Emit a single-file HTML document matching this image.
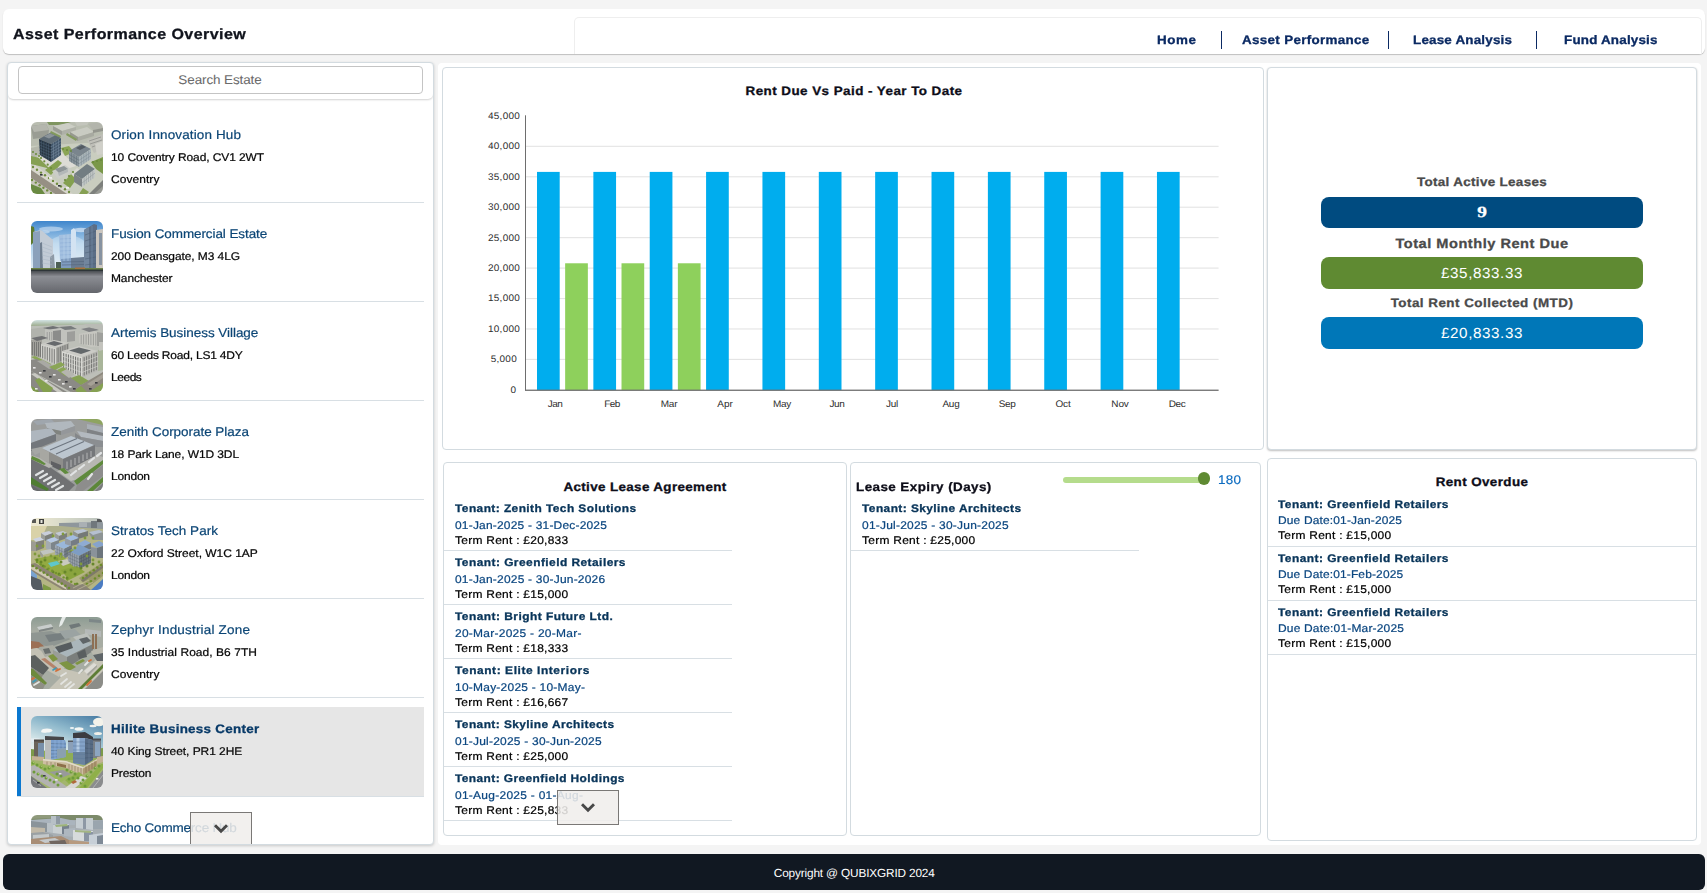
<!DOCTYPE html>
<html><head><meta charset="utf-8"><title>Asset Performance Overview</title>
<style>
html,body{margin:0;padding:0}
body{width:1707px;height:893px;overflow:hidden;position:relative;background:#f4f4f4;font-family:"Liberation Sans",sans-serif;text-rendering:geometricPrecision;}
.t{position:absolute;white-space:nowrap;line-height:16.0px;}
.b{position:absolute;box-sizing:border-box;}
.pn{position:absolute;box-sizing:border-box;background:#fff;border:1px solid #d3dbe0;border-radius:4px;}
.th{position:absolute;display:block;}
.sep{position:absolute;height:1px;background:#d8dfe4;}
.title{font-size:14.7px;font-weight:700;color:#10131c;-webkit-text-stroke:0.3px #10131c;}
.nav{font-size:12.3px;font-weight:700;color:#0b2a63;-webkit-text-stroke:0.3px #0b2a63;}
.h{font-size:12.3px;font-weight:700;color:#0d0d18;-webkit-text-stroke:0.3px #0d0d18;}
.ctitle{font-size:12.3px;font-weight:700;color:#0d0d18;-webkit-text-stroke:0.3px #0d0d18;}
.kl{font-size:12.3px;font-weight:700;color:#4a4a4a;-webkit-text-stroke:0.3px #4a4a4a;}
.kl2{font-size:13.4px;font-weight:700;color:#4a4a4a;-webkit-text-stroke:0.3px #4a4a4a;}
.ten{font-size:10.95px;font-weight:700;color:#083459;-webkit-text-stroke:0.3px #083459;}
.date{font-size:11.2px;font-weight:400;color:#0c4780;-webkit-text-stroke:0.22px #0c4780;}
.term{font-size:11.2px;font-weight:400;color:#000000;-webkit-text-stroke:0.22px #000000;}
.nm{font-size:12.6px;font-weight:400;color:#0b4575;-webkit-text-stroke:0.2px #0b4575;}
.nmb{font-size:12.3px;font-weight:700;color:#083a68;-webkit-text-stroke:0.3px #083a68;}
.ad{font-size:11.2px;font-weight:400;color:#060606;-webkit-text-stroke:0.22px #060606;}
.srch{font-size:12.6px;font-weight:400;color:#6b6b6b;-webkit-text-stroke:0.05px #6b6b6b;}
.pill{font-size:14.6px;font-weight:400;color:#ffffff;-webkit-text-stroke:0.0px #ffffff;}
.cl{font-size:9.5px;font-weight:400;color:#2e2e2e;-webkit-text-stroke:0.0px #2e2e2e;}
.s180{font-size:12.6px;font-weight:400;color:#0d6cc0;-webkit-text-stroke:0.15px #0d6cc0;}
.foot{font-size:11.8px;font-weight:400;color:#ffffff;-webkit-text-stroke:0.0px #ffffff;}
</style></head>
<body>
<div class="b" style="left:3px;top:8.5px;width:1702px;height:45.5px;background:#fff;border-radius:6px;box-shadow:0 1px 1px rgba(0,0,0,.22);"></div>
<div class="b" style="left:574px;top:17px;width:1127.5px;height:37px;background:#fff;border:1px solid #eeeeee;border-bottom:none;border-radius:5px 5px 0 0;"></div>
<div class="t title" id="m_title" style="top:27.00px;letter-spacing:0.408px;left:13.00px;transform-origin:0 50%;transform:scaleX(1.090);">Asset Performance Overview</div>
<div class="t nav" style="top:32.00px;letter-spacing:0.521px;left:1157.30px;transform-origin:0 50%;transform:scaleX(1.090);">Home</div>
<div class="t nav" id="m_nav" style="top:32.00px;letter-spacing:0.295px;left:1241.50px;transform-origin:0 50%;transform:scaleX(1.090);">Asset Performance</div>
<div class="t nav" style="top:32.00px;letter-spacing:0.180px;left:1413.30px;transform-origin:0 50%;transform:scaleX(1.090);">Lease Analysis</div>
<div class="t nav" style="top:32.00px;letter-spacing:0.181px;left:1564.40px;transform-origin:0 50%;transform:scaleX(1.090);">Fund Analysis</div>
<div class="b" style="left:1220.7px;top:31px;width:1.2px;height:17.5px;background:#0b2a63;"></div>
<div class="b" style="left:1387.8px;top:31px;width:1.2px;height:17.5px;background:#0b2a63;"></div>
<div class="b" style="left:1536.1px;top:31px;width:1.2px;height:17.5px;background:#0b2a63;"></div>
<div class="pn" style="left:7px;top:62px;width:427px;height:782.6px;box-shadow:0 1px 3px rgba(0,0,0,.18);overflow:hidden;">
<div class="sep" style="left:9px;top:139px;width:407px;"></div>
<div style="position:absolute;left:23px;top:59px;width:72px;height:72px;"><svg class="th" width="72" height="72" viewBox="0 0 72 72" preserveAspectRatio="none"><defs><filter id="bl0" x="-5%" y="-5%" width="110%" height="110%"><feGaussianBlur stdDeviation="0.45"/></filter><filter id="gn0" x="0" y="0" width="100%" height="100%"><feTurbulence type="fractalNoise" baseFrequency="0.33" numOctaves="2" seed="11" result="n"/><feColorMatrix in="n" type="matrix" values="0 0 0 0 0  0 0 0 0 0  0 0 0 0 0  1.6 1.2 0 0 -1.05"/></filter><filter id="gw0" x="0" y="0" width="100%" height="100%"><feTurbulence type="fractalNoise" baseFrequency="0.3" numOctaves="2" seed="31" result="n"/><feColorMatrix in="n" type="matrix" values="0 0 0 0 1  0 0 0 0 1  0 0 0 0 1  0 1.3 1.5 0 -1.1"/></filter><clipPath id="cp0"><rect x="0" y="0" width="72" height="72" rx="6" ry="6"/></clipPath></defs><g clip-path="url(#cp0)"><g filter="url(#bl0)"><rect x="0" y="0" width="72" height="72" fill="#c9cdbf"/><polygon points="0,0 72,0 72,20 0,24" fill="#b9bdb0"/><polygon points="0,4 15,2 18,8 17,15 2,17" fill="#9a9d94"/><polygon points="0,4 15,2 18,8 3,10" fill="#b4b6ad"/><polygon points="16,0 40,0 30,3 18,3" fill="#7f9560"/><polygon points="22,4 37,1 45,5 31,9" fill="#cccec5"/><polygon points="22,4 31,9 31,13 22,8" fill="#9c9e96"/><polygon points="31,9 45,5 45,9 31,13" fill="#aeb0a7"/><polygon points="20,9 30,14 29,16 19,11" fill="#82995c"/><polygon points="39,10 56,5 63,10 47,15" fill="#c9cbc2"/><polygon points="39,10 47,15 47,19 39,14" fill="#96988f"/><polygon points="47,15 63,10 63,14 47,19" fill="#a8aaa1"/><polygon points="36,11 46,17 45,19 35,13" fill="#849b5e"/><polygon points="44,0 58,0 56,3 46,4" fill="#c3c5bc"/><polygon points="57,2 70,0 72,6 62,8" fill="#b3b5ac"/><polygon points="62,8 72,6 72,9 62,11" fill="#94968e"/><polygon points="56,18 72,12 72,27 63,31" fill="#bfbfb8"/><g stroke="#8f918b" stroke-width="0.8"><line x1="58" y1="19" x2="70" y2="15"/><line x1="59" y1="22" x2="71" y2="18"/><line x1="61" y1="25" x2="72" y2="21"/></g><polygon points="64,22 72,19 72,32 66,33" fill="#d0d0c9"/><polygon points="0,26 8,24 10,34 0,36" fill="#b5b8ac"/><polygon points="0,34 9,36 20,47 0,42" fill="#86a052"/><polygon points="6,34 30,30 45,44 23,51" fill="#dddcd6"/><polygon points="30,26 38,24 43,30 34,34" fill="#8ba556"/><polygon points="14,48 27,38 31,41 20,53" fill="#84a04f"/><polygon points="21,49 34,43 40,47 38,52 27,57" fill="#cbcdc8"/><polygon points="24,47 33,44 37,47 28,51" fill="#8f9698"/><polygon points="27,51 37,47 37,50 28,54" fill="#b3b8b8"/><polygon points="32,61 42,50 47,55 39,66" fill="#84a04f"/><polygon points="60,40 72,35 72,52 65,47" fill="#7a984a"/><polygon points="46,46 52,50 44,56 40,52" fill="#d9d9d3"/><polygon points="8,17 19,11 30,16 20,22" fill="#5f6c76"/><polygon points="8,17 20,22 20,40 9,33" fill="#283542"/><polygon points="20,22 30,16 30,33 20,40" fill="#43566a"/><polygon points="13,14.5 19,11.5 24,13.5 18,16.5" fill="#8b949a"/><g stroke="#4f6478" stroke-width="0.5"><line x1="10.4" y1="18.0" x2="10.4" y2="35.0"/><line x1="12.8" y1="19.0" x2="12.8" y2="36.0"/><line x1="15.2" y1="20.0" x2="15.2" y2="37.0"/><line x1="17.6" y1="21.0" x2="17.6" y2="38.0"/><line x1="8" y1="19.8" x2="20" y2="24.8"/><line x1="8" y1="22.7" x2="20" y2="27.7"/><line x1="8" y1="25.5" x2="20" y2="30.5"/><line x1="8" y1="28.3" x2="20" y2="33.3"/><line x1="8" y1="31.2" x2="20" y2="36.2"/></g><g stroke="#7b8fa3" stroke-width="0.5"><line x1="22.5" y1="20.5" x2="22.5" y2="37.5"/><line x1="25.0" y1="19.0" x2="25.0" y2="36.0"/><line x1="27.5" y1="17.5" x2="27.5" y2="34.5"/><line x1="20" y1="24.8" x2="30" y2="18.8"/><line x1="20" y1="27.7" x2="30" y2="21.7"/><line x1="20" y1="30.5" x2="30" y2="24.5"/><line x1="20" y1="33.3" x2="30" y2="27.3"/><line x1="20" y1="36.2" x2="30" y2="30.2"/></g><polygon points="38,29 50,22 60,27 48,35" fill="#7a858d"/><polygon points="38,29 48,35 48,45 38,39" fill="#87939a"/><polygon points="48,35 60,27 60,37 48,45" fill="#aab5ba"/><polygon points="45,26 51,23 55,25 49,28" fill="#525b62"/><g stroke="#5d6a72" stroke-width="0.5"><line x1="40.5" y1="30.5" x2="40.5" y2="40.5"/><line x1="43.0" y1="32.0" x2="43.0" y2="42.0"/><line x1="45.5" y1="33.5" x2="45.5" y2="43.5"/><line x1="38" y1="32.3" x2="48" y2="38.3"/><line x1="38" y1="35.7" x2="48" y2="41.7"/></g><g stroke="#7d8b93" stroke-width="0.5"><line x1="50.4" y1="33.4" x2="50.4" y2="43.4"/><line x1="52.8" y1="31.8" x2="52.8" y2="41.8"/><line x1="55.2" y1="30.2" x2="55.2" y2="40.2"/><line x1="57.6" y1="28.6" x2="57.6" y2="38.6"/><line x1="48" y1="38.3" x2="60" y2="30.3"/><line x1="48" y1="41.7" x2="60" y2="33.7"/></g><polygon points="43,52 56,42 64,47 51,57" fill="#727d82"/><polygon points="43,52 51,57 51,65 43,60" fill="#7b8285"/><polygon points="51,57 64,47 64,55 51,65" fill="#c3c8c7"/><g stroke="#8d9698" stroke-width="0.5"><line x1="53.2" y1="55.3" x2="53.2" y2="63.3"/><line x1="55.3" y1="53.7" x2="55.3" y2="61.7"/><line x1="57.5" y1="52.0" x2="57.5" y2="60.0"/><line x1="59.7" y1="50.3" x2="59.7" y2="58.3"/><line x1="61.8" y1="48.7" x2="61.8" y2="56.7"/><line x1="51" y1="61.0" x2="64" y2="51.0"/></g><polygon points="0,44 4,43 42,72 36,72 0,48" fill="#d8d6cd"/><polygon points="0,48 36,72 24,72 0,56" fill="#969084"/><polygon points="0,56 24,72 12,72 0,63" fill="#c7c7bb"/><polygon points="0,62 10,66 14,72 0,72" fill="#6b8a43"/><polygon points="58,72 72,58 72,72" fill="#7d807b"/><polygon points="63,72 72,64 72,72" fill="#989a94"/><polygon points="52,66 58,70 56,72 48,72" fill="#86a052"/><g fill="#6e8b3c"><circle cx="2.0" cy="45.0" r="1.2"/><circle cx="6.0" cy="47.8" r="1.2"/><circle cx="10.0" cy="50.6" r="1.2"/><circle cx="14.0" cy="53.3" r="1.2"/><circle cx="18.0" cy="56.1" r="1.2"/><circle cx="22.0" cy="58.9" r="1.2"/><circle cx="26.0" cy="61.7" r="1.2"/><circle cx="30.0" cy="64.4" r="1.2"/><circle cx="34.0" cy="67.2" r="1.2"/><circle cx="38.0" cy="70.0" r="1.2"/></g><g fill="#6e8b3c"><circle cx="1.0" cy="58.0" r="1.2"/><circle cx="4.8" cy="60.6" r="1.2"/><circle cx="8.6" cy="63.2" r="1.2"/><circle cx="12.4" cy="65.8" r="1.2"/><circle cx="16.2" cy="68.4" r="1.2"/><circle cx="20.0" cy="71.0" r="1.2"/></g><g fill="#6a8a3a"><circle cx="10.0" cy="36.0" r="1.1"/><circle cx="13.3" cy="39.3" r="1.1"/><circle cx="16.7" cy="42.7" r="1.1"/><circle cx="20.0" cy="46.0" r="1.1"/><circle cx="34.0" cy="58.0" r="1.1"/><circle cx="38.0" cy="54.0" r="1.1"/><circle cx="42.0" cy="50.0" r="1.1"/><circle cx="62.0" cy="40.0" r="1.1"/><circle cx="66.0" cy="39.0" r="1.1"/><circle cx="70.0" cy="38.0" r="1.1"/></g><g fill="#6a8a3a"><circle cx="2.0" cy="30.0" r="1.0"/><circle cx="5.0" cy="32.0" r="1.0"/><circle cx="8.0" cy="34.0" r="1.0"/><circle cx="32.0" cy="27.0" r="1.0"/><circle cx="36.0" cy="28.0" r="1.0"/><circle cx="40.0" cy="29.0" r="1.0"/></g><rect x="18" y="55" width="3" height="1.8" fill="#ececec"/><rect x="35" y="65" width="3" height="1.8" fill="#ececec"/><rect x="9" y="52" width="2.6" height="1.6" fill="#33373b"/><rect x="27" y="63" width="2.6" height="1.6" fill="#33373b"/></g></g></svg></div>
<div class="t nm" id="m_nm" style="top:64.00px;letter-spacing:0.128px;left:103.00px;transform-origin:0 50%;transform:scaleX(1.070);">Orion Innovation Hub</div>
<div class="t ad" id="m_ad" style="top:87.00px;letter-spacing:-0.073px;left:103.00px;transform-origin:0 50%;transform:scaleX(1.070);">10 Coventry Road, CV1 2WT</div>
<div class="t ad" style="top:109.00px;letter-spacing:0.064px;left:103.00px;transform-origin:0 50%;transform:scaleX(1.070);">Coventry</div>
<div class="sep" style="left:9px;top:238px;width:407px;"></div>
<div style="position:absolute;left:23px;top:158px;width:72px;height:72px;"><svg class="th" width="72" height="72" viewBox="0 0 72 72" preserveAspectRatio="none"><defs><filter id="bl1" x="-5%" y="-5%" width="110%" height="110%"><feGaussianBlur stdDeviation="0.45"/></filter><filter id="gn1" x="0" y="0" width="100%" height="100%"><feTurbulence type="fractalNoise" baseFrequency="0.33" numOctaves="2" seed="12" result="n"/><feColorMatrix in="n" type="matrix" values="0 0 0 0 0  0 0 0 0 0  0 0 0 0 0  1.6 1.2 0 0 -1.05"/></filter><filter id="gw1" x="0" y="0" width="100%" height="100%"><feTurbulence type="fractalNoise" baseFrequency="0.3" numOctaves="2" seed="32" result="n"/><feColorMatrix in="n" type="matrix" values="0 0 0 0 1  0 0 0 0 1  0 0 0 0 1  0 1.3 1.5 0 -1.1"/></filter><clipPath id="cp1"><rect x="0" y="0" width="72" height="72" rx="6" ry="6"/></clipPath></defs><g clip-path="url(#cp1)"><g filter="url(#bl1)"><defs><linearGradient id="sk2" x1="0" y1="0" x2="0" y2="1"><stop offset="0" stop-color="#3f86cc"/><stop offset="0.45" stop-color="#a9cdea"/><stop offset="1" stop-color="#e6eef4"/></linearGradient><linearGradient id="gr2" x1="0" y1="0" x2="0" y2="1"><stop offset="0" stop-color="#4a4d52"/><stop offset="0.25" stop-color="#8c8e94"/><stop offset="0.6" stop-color="#7a7c82"/><stop offset="1" stop-color="#64666c"/></linearGradient></defs><rect x="0" y="0" width="72" height="50" fill="url(#sk2)"/><ellipse cx="20" cy="8" rx="12" ry="2.6" fill="#dfeaf6" opacity="0.55"/><ellipse cx="12" cy="11" rx="7" ry="1.6" fill="#e8f0f8" opacity="0.5"/><ellipse cx="50" cy="9" rx="8" ry="2.2" fill="#eef4fa" opacity="0.6"/><ellipse cx="36" cy="30" rx="22" ry="16" fill="#f2f6fa" opacity="0.35"/><polygon points="0,5 3,6 4,14 2,22 0,24" fill="#5b7a2e"/><polygon points="2,11 10,9 22,19 22,48 2,48" fill="#c3ccd6"/><polygon points="2,11 9,10 9,48 2,48" fill="#8ba1bb"/><polygon points="9,22 11,21 12,48 9,48" fill="#6f7f90"/><polygon points="19,36 23,33 24,48 19,48" fill="#8e9aa6"/><polygon points="28,14 40,13 40,40 29,40" fill="#a3c0e0"/><polygon points="40,9 43,7 45,10 45,38 40,38" fill="#d3e3f2"/><polygon points="30,38 42,37 42,48 30,48" fill="#7f9cc0"/><polygon points="40,37 53,36 53,48 40,48" fill="#6a7c92"/><polygon points="25,41 30,41 30,48 25,48" fill="#4d5f55"/><polygon points="53,9 63,3 66,4 66,48 53,48" fill="#5b6e86"/><polygon points="53,9 58,6 58,48 53,48" fill="#72869e"/><polygon points="65,9 72,8 72,48 65,48" fill="#cbc6bf"/><polygon points="68,12 71,12 71,44 68,44" fill="#8793a1"/><g stroke="#a9b6c4" stroke-width="0.5"><line x1="11" y1="22" x2="21" y2="26"/><line x1="11" y1="26" x2="21" y2="29.5"/><line x1="11" y1="30" x2="21" y2="33"/><line x1="11" y1="34" x2="21" y2="36.5"/><line x1="11" y1="38" x2="21" y2="40"/><line x1="11" y1="42" x2="21" y2="43.5"/></g><g stroke="#86a9d2" stroke-width="0.5"><line x1="29" y1="18" x2="40" y2="17.5"/><line x1="29" y1="22" x2="40" y2="21.5"/><line x1="29" y1="26" x2="40" y2="25.5"/><line x1="29" y1="30" x2="40" y2="29.5"/><line x1="29" y1="34" x2="40" y2="33.5"/></g><g stroke="#c3d8ee" stroke-width="0.5"><line x1="33" y1="14" x2="33" y2="40"/><line x1="37" y1="13.5" x2="37" y2="40"/></g><g stroke="#4a5c73" stroke-width="0.5"><line x1="54" y1="14" x2="65" y2="10"/><line x1="54" y1="20" x2="65" y2="16.5"/><line x1="54" y1="26" x2="65" y2="23"/><line x1="54" y1="32" x2="65" y2="29.5"/><line x1="54" y1="38" x2="65" y2="36"/><line x1="54" y1="44" x2="65" y2="42.5"/></g><g stroke="#7d92ab" stroke-width="0.6"><line x1="61" y1="5" x2="61" y2="48"/></g><g stroke="#52637a" stroke-width="0.6"><line x1="31" y1="41" x2="53" y2="40.5"/><line x1="31" y1="44" x2="53" y2="43.5"/></g><rect x="0" y="47" width="72" height="2" fill="#6b7f45"/><rect x="44" y="46.5" width="10" height="1.6" fill="#a86f3a"/><rect x="0" y="48.5" width="72" height="2" fill="#2d3638"/><rect x="0" y="50" width="72" height="22" fill="url(#gr2)"/></g></g></svg></div>
<div class="t nm" style="top:163.00px;letter-spacing:-0.071px;left:103.00px;transform-origin:0 50%;transform:scaleX(1.070);">Fusion Commercial Estate</div>
<div class="t ad" style="top:186.00px;letter-spacing:-0.063px;left:103.00px;transform-origin:0 50%;transform:scaleX(1.070);">200 Deansgate, M3 4LG</div>
<div class="t ad" style="top:208.00px;letter-spacing:-0.114px;left:103.00px;transform-origin:0 50%;transform:scaleX(1.070);">Manchester</div>
<div class="sep" style="left:9px;top:337px;width:407px;"></div>
<div style="position:absolute;left:23px;top:257px;width:72px;height:72px;"><svg class="th" width="72" height="72" viewBox="0 0 72 72" preserveAspectRatio="none"><defs><filter id="bl2" x="-5%" y="-5%" width="110%" height="110%"><feGaussianBlur stdDeviation="0.45"/></filter><filter id="gn2" x="0" y="0" width="100%" height="100%"><feTurbulence type="fractalNoise" baseFrequency="0.33" numOctaves="2" seed="13" result="n"/><feColorMatrix in="n" type="matrix" values="0 0 0 0 0  0 0 0 0 0  0 0 0 0 0  1.6 1.2 0 0 -1.05"/></filter><filter id="gw2" x="0" y="0" width="100%" height="100%"><feTurbulence type="fractalNoise" baseFrequency="0.3" numOctaves="2" seed="33" result="n"/><feColorMatrix in="n" type="matrix" values="0 0 0 0 1  0 0 0 0 1  0 0 0 0 1  0 1.3 1.5 0 -1.1"/></filter><clipPath id="cp2"><rect x="0" y="0" width="72" height="72" rx="6" ry="6"/></clipPath></defs><g clip-path="url(#cp2)"><g filter="url(#bl2)"><rect x="0" y="0" width="72" height="72" fill="#bdbfb8"/><defs><linearGradient id="sk3" x1="0" y1="0" x2="0" y2="1"><stop offset="0" stop-color="#d3e3e3"/><stop offset="1" stop-color="#9cab8c"/></linearGradient></defs><rect x="0" y="0" width="72" height="6" fill="url(#sk3)"/><polygon points="0,6 72,4 72,14 0,16" fill="#bcbfb8"/><polygon points="0,9 14,7 14,17 0,17" fill="#b1b3ad"/><polygon points="12,8 22,6 30,8 20,10" fill="#6f7274"/><polygon points="14,10 30,8 44,11 44,21 30,23 14,19" fill="#c1c2bd"/><polygon points="22,11 30,10 30,23 22,21" fill="#8b8c8b"/><polygon points="36,12 44,11 44,21 36,22" fill="#9d9e9b"/><polygon points="28,7 40,6 46,9 34,10" fill="#787b7d"/><polygon points="48,14 62,11 72,13 72,26 60,27 48,23" fill="#c6c6c0"/><polygon points="66,12 72,13 72,26 66,26" fill="#9fa09c"/><polygon points="50,9 60,7 68,10 58,12" fill="#7f8183"/><polygon points="52,4 72,4 72,10 60,8" fill="#b9bbb5"/><g stroke="#8d8e8b" stroke-width="0.7"><line x1="50.2" y1="14.9" x2="50.2" y2="24.1"/><line x1="52.6" y1="14.6" x2="52.6" y2="24.4"/><line x1="55.1" y1="14.4" x2="55.1" y2="24.6"/><line x1="57.5" y1="14.2" x2="57.5" y2="24.9"/><line x1="59.9" y1="13.9" x2="59.9" y2="25.1"/><line x1="62.4" y1="13.7" x2="62.4" y2="25.3"/><line x1="64.8" y1="13.4" x2="64.8" y2="25.6"/></g><g stroke="#909190" stroke-width="0.7"><line x1="16.2" y1="12.0" x2="16.2" y2="19.7"/><line x1="18.5" y1="12.0" x2="18.5" y2="20.2"/><line x1="20.8" y1="12.0" x2="20.8" y2="20.7"/></g><polygon points="0,20 11,18 11,38 0,35" fill="#a3a29c"/><polygon points="0,18 11,16 17,18 6,21" fill="#6f7173"/><g stroke="#6d6d69" stroke-width="0.8"><line x1="1.5" y1="22.0" x2="1.5" y2="35.3"/><line x1="3.5" y1="22.0" x2="3.5" y2="35.7"/><line x1="5.5" y1="22.0" x2="5.5" y2="36.1"/><line x1="7.5" y1="22.0" x2="7.5" y2="36.5"/><line x1="9.5" y1="22.0" x2="9.5" y2="36.9"/></g><polygon points="10,24 23,20 38,23 25,28" fill="#c9c9c4"/><polygon points="15,23.5 23,21 32,23.5 24,26" fill="#66696c"/><polygon points="10,24 25,28 25,45 10,38" fill="#d3d3ce"/><polygon points="25,28 38,23 38,37 31,41 25,45" fill="#a8a8a3"/><g stroke="#6f706e" stroke-width="0.9"><line x1="11.7" y1="25.9" x2="11.7" y2="38.3"/><line x1="14.0" y1="26.6" x2="14.0" y2="39.4"/><line x1="16.3" y1="27.2" x2="16.3" y2="40.5"/><line x1="18.7" y1="27.8" x2="18.7" y2="41.6"/><line x1="21.0" y1="28.5" x2="21.0" y2="42.7"/><line x1="23.3" y1="29.1" x2="23.3" y2="43.8"/></g><g stroke="#6f706e" stroke-width="0.8"><line x1="27.1" y1="27.7" x2="27.1" y2="42.4"/><line x1="29.4" y1="26.8" x2="29.4" y2="41.3"/><line x1="31.8" y1="25.9" x2="31.8" y2="40.1"/><line x1="34.0" y1="25.1" x2="34.0" y2="39.0"/><line x1="36.4" y1="24.2" x2="36.4" y2="37.8"/></g><polygon points="31,31 48,26 67,31 51,37" fill="#cbcbc6"/><polygon points="38,30.5 48,27.5 60,30.5 50,34" fill="#64676b"/><polygon points="31,31 51,37 51,58 31,49" fill="#d9d9d4"/><polygon points="51,37 67,31 67,51 51,58" fill="#b9b9b4"/><g stroke="#6c6d6b" stroke-width="1.0"><line x1="32.7" y1="33.1" x2="32.7" y2="49.0"/><line x1="35.1" y1="33.8" x2="35.1" y2="50.0"/><line x1="37.4" y1="34.5" x2="37.4" y2="51.1"/><line x1="39.8" y1="35.2" x2="39.8" y2="52.2"/><line x1="42.2" y1="36.0" x2="42.2" y2="53.2"/><line x1="44.6" y1="36.7" x2="44.6" y2="54.3"/><line x1="46.9" y1="37.4" x2="46.9" y2="55.4"/><line x1="49.3" y1="38.1" x2="49.3" y2="56.4"/></g><g stroke="#6f706e" stroke-width="0.9"><line x1="53.2" y1="37.2" x2="53.2" y2="55.5"/><line x1="55.6" y1="36.3" x2="55.6" y2="54.5"/><line x1="58.0" y1="35.4" x2="58.0" y2="53.4"/><line x1="60.5" y1="34.5" x2="60.5" y2="52.3"/><line x1="62.9" y1="33.5" x2="62.9" y2="51.3"/><line x1="65.3" y1="32.6" x2="65.3" y2="50.2"/></g><g stroke="#d9d9d4" stroke-width="0.6"><line x1="31" y1="36" x2="51" y2="42.5"/><line x1="31" y1="40.5" x2="51" y2="47.5"/><line x1="31" y1="45" x2="51" y2="52.5"/><line x1="51" y1="42.5" x2="67" y2="36"/><line x1="51" y1="47.5" x2="67" y2="41"/><line x1="51" y1="52.5" x2="67" y2="46"/></g><polygon points="67,30 72,29 72,50 67,51" fill="#a9b59a"/><polygon points="68,22 72,22 72,30 68,31" fill="#c3c3bd"/><polygon points="0,37 4,36 20,44 18,47" fill="#8aa556"/><polygon points="0,40 6,39 52,64 40,72 0,51" fill="#8b8a86"/><polygon points="6,41 12,40 24,47 18,49" fill="#a9a9a4"/><polygon points="18,47 30,42 34,45 24,50" fill="#8aa556"/><polygon points="26,50 32,47 40,52 34,56" fill="#8ba657"/><polygon points="30,52 36,49 44,54 38,58" fill="#b5b5af"/><polygon points="40,58 48,55 58,61 50,65" fill="#86a152"/><polygon points="0,51 36,72 0,72" fill="#8a8984"/><polygon points="0,54 4,53 32,72 26,72" fill="#c9c9c2"/><polygon points="4,60 8,58 22,68 20,72 12,72" fill="#84a050"/><polygon points="0,66 6,69 8,72 0,72" fill="#7e9a4c"/><polygon points="50,65 72,52 72,72 40,72" fill="#8e897f"/><polygon points="56,64 72,54 72,58 60,66" fill="#a5a096"/><polygon points="58,72 72,63 72,72" fill="#86a152"/><polygon points="44,70 50,66 56,72 46,72" fill="#86a152"/><g fill="#e6e6e6"><rect x="2" y="47" width="2.6" height="1.6"/><rect x="8" y="52" width="2.6" height="1.6"/><rect x="22" y="54" width="2.6" height="1.6"/><rect x="27" y="59" width="2.6" height="1.6"/><rect x="31" y="63" width="2.6" height="1.6"/><rect x="38" y="66" width="2.6" height="1.6"/><rect x="4" y="68" width="2.6" height="1.6"/><rect x="14" y="60" width="2.6" height="1.6"/></g><g fill="#3a3c40"><rect x="12" y="50" width="2.6" height="1.6"/><rect x="18" y="56" width="2.6" height="1.6"/><rect x="34" y="61" width="2.6" height="1.6"/><rect x="42" y="68" width="2.6" height="1.6"/><rect x="58" y="68" width="2.6" height="1.6"/><rect x="64" y="62" width="2.6" height="1.6"/></g></g></g></svg></div>
<div class="t nm" style="top:262.00px;letter-spacing:-0.029px;left:103.00px;transform-origin:0 50%;transform:scaleX(1.070);">Artemis Business Village</div>
<div class="t ad" style="top:285.00px;letter-spacing:-0.179px;left:103.00px;transform-origin:0 50%;transform:scaleX(1.070);">60 Leeds Road, LS1 4DY</div>
<div class="t ad" style="top:307.00px;letter-spacing:-0.417px;left:103.00px;transform-origin:0 50%;transform:scaleX(1.070);">Leeds</div>
<div class="sep" style="left:9px;top:436px;width:407px;"></div>
<div style="position:absolute;left:23px;top:356px;width:72px;height:72px;"><svg class="th" width="72" height="72" viewBox="0 0 72 72" preserveAspectRatio="none"><defs><filter id="bl3" x="-5%" y="-5%" width="110%" height="110%"><feGaussianBlur stdDeviation="0.45"/></filter><filter id="gn3" x="0" y="0" width="100%" height="100%"><feTurbulence type="fractalNoise" baseFrequency="0.33" numOctaves="2" seed="14" result="n"/><feColorMatrix in="n" type="matrix" values="0 0 0 0 0  0 0 0 0 0  0 0 0 0 0  1.6 1.2 0 0 -1.05"/></filter><filter id="gw3" x="0" y="0" width="100%" height="100%"><feTurbulence type="fractalNoise" baseFrequency="0.3" numOctaves="2" seed="34" result="n"/><feColorMatrix in="n" type="matrix" values="0 0 0 0 1  0 0 0 0 1  0 0 0 0 1  0 1.3 1.5 0 -1.1"/></filter><clipPath id="cp3"><rect x="0" y="0" width="72" height="72" rx="6" ry="6"/></clipPath></defs><g clip-path="url(#cp3)"><g filter="url(#bl3)"><rect x="0" y="0" width="72" height="72" fill="#9b9d9c"/><polygon points="46,0 72,0 72,6" fill="#8ea460"/><polygon points="2,2 20,0 24,4 6,6" fill="#9fa6ad"/><polygon points="14,4 40,2 44,7 30,12 16,9" fill="#b1b8be"/><polygon points="16,9 30,12 30,16 16,13" fill="#80837f"/><polygon points="30,12 44,7 44,12 30,16" fill="#94979a"/><polygon points="0,12 20,9 25,15 0,24" fill="#aeb6be"/><polygon points="0,24 25,15 25,22 0,32" fill="#73777b"/><polygon points="56,5 72,8 72,14 56,10" fill="#a9afb5"/><polygon points="56,10 72,14 72,18 56,14" fill="#7f8285"/><polygon points="46,12 72,17 72,22 50,18" fill="#b3b9bf"/><polygon points="44,14 50,18 50,25 44,21" fill="#84878a"/><polygon points="50,18 72,22 72,28 66,28 50,25" fill="#8b8e91"/><polygon points="0,30 10,28 16,30 4,36" fill="#a5a7a5"/><polygon points="11,29 40,17 63,26 32,40" fill="#bcc6cf"/><g stroke="#6e7680" stroke-width="1.1"><line x1="19" y1="31" x2="46" y2="19.5"/><line x1="25" y1="35" x2="53" y2="22.5"/></g><polygon points="9,29 18,33 18,44 9,39" fill="#a7a7a2"/><polygon points="18,33 32,40 32,53 18,44" fill="#8e8e8b"/><polygon points="20,42 30,46 30,52 20,47" fill="#5f6163"/><polygon points="32,40 64,26 64,37 38,51 32,53" fill="#75777a"/><g stroke="#a9abac" stroke-width="1.2"><line x1="36" y1="42.5" x2="36" y2="50.0"/><line x1="40" y1="40.74" x2="40" y2="48.0"/><line x1="44" y1="38.98" x2="44" y2="46.0"/><line x1="48" y1="37.22" x2="48" y2="44.0"/><line x1="52" y1="35.46" x2="52" y2="42.0"/><line x1="56" y1="33.7" x2="56" y2="40.0"/><line x1="60" y1="31.939999999999998" x2="60" y2="38.0"/></g><polygon points="0,38 9,41 44,66 38,72 0,72" fill="#6f7173"/><polygon points="0,36 9,39 22,47 18,49 0,40" fill="#b5b5b0"/><polygon points="1,37 8,40 15,45 13,46 0,40" fill="#5f8a3c"/><polygon points="26,52 34,50 46,60 40,62" fill="#bdbdb8"/><polygon points="28,50 33,49 38,54 34,55" fill="#5f8a3c"/><polygon points="38,51 66,36 72,38 72,44 44,62" fill="#b7b7b3"/><polygon points="43,62 72,41 72,45 46,66" fill="#5f8a3c"/><polygon points="46,66 72,46 72,57 52,72 44,72" fill="#8d8d8c"/><polygon points="56,72 72,58 72,63 62,72" fill="#5c8739"/><polygon points="64,72 72,64 72,72" fill="#7a7c7d"/><polygon points="0,58 18,70 16,72 0,65" fill="#4f7d33"/><polygon points="0,66 10,72 0,72" fill="#66696b"/><g stroke="#e1e3e4" stroke-width="2.2" stroke-linecap="round"><line x1="5" y1="56" x2="12" y2="52"/><line x1="9" y1="59" x2="16" y2="55"/><line x1="13" y1="62" x2="20" y2="58"/><line x1="17" y1="65" x2="24" y2="61"/><line x1="21" y1="68" x2="28" y2="64"/><line x1="25" y1="71" x2="32" y2="67"/><line x1="40" y1="56" x2="45" y2="52"/><line x1="48" y1="50" x2="53" y2="46"/><line x1="58" y1="43" x2="63" y2="39"/><line x1="66" y1="37" x2="70" y2="34"/><line x1="57" y1="60" x2="61" y2="55"/></g></g></g></svg></div>
<div class="t nm" style="top:361.00px;letter-spacing:-0.027px;left:103.00px;transform-origin:0 50%;transform:scaleX(1.070);">Zenith Corporate Plaza</div>
<div class="t ad" style="top:384.00px;letter-spacing:-0.080px;left:103.00px;transform-origin:0 50%;transform:scaleX(1.070);">18 Park Lane, W1D 3DL</div>
<div class="t ad" style="top:406.00px;letter-spacing:-0.175px;left:103.00px;transform-origin:0 50%;transform:scaleX(1.070);">London</div>
<div class="sep" style="left:9px;top:535px;width:407px;"></div>
<div style="position:absolute;left:23px;top:455px;width:72px;height:72px;"><svg class="th" width="72" height="72" viewBox="0 0 72 72" preserveAspectRatio="none"><defs><filter id="bl4" x="-5%" y="-5%" width="110%" height="110%"><feGaussianBlur stdDeviation="0.45"/></filter><filter id="gn4" x="0" y="0" width="100%" height="100%"><feTurbulence type="fractalNoise" baseFrequency="0.33" numOctaves="2" seed="15" result="n"/><feColorMatrix in="n" type="matrix" values="0 0 0 0 0  0 0 0 0 0  0 0 0 0 0  1.6 1.2 0 0 -1.05"/></filter><filter id="gw4" x="0" y="0" width="100%" height="100%"><feTurbulence type="fractalNoise" baseFrequency="0.3" numOctaves="2" seed="35" result="n"/><feColorMatrix in="n" type="matrix" values="0 0 0 0 1  0 0 0 0 1  0 0 0 0 1  0 1.3 1.5 0 -1.1"/></filter><clipPath id="cp4"><rect x="0" y="0" width="72" height="72" rx="6" ry="6"/></clipPath></defs><g clip-path="url(#cp4)"><g filter="url(#bl4)"><rect x="0" y="0" width="72" height="72" fill="#b4b585"/><defs><linearGradient id="sk5" x1="0" y1="0" x2="1" y2="0"><stop offset="0" stop-color="#f0ead2"/><stop offset="0.5" stop-color="#d5d8c8"/><stop offset="1" stop-color="#b9c0bc"/></linearGradient></defs><rect x="0" y="0" width="72" height="8" fill="url(#sk5)"/><rect x="1" y="1" width="4" height="4" fill="#5a5a55"/><rect x="8" y="1" width="5" height="5" fill="#3f3f3c"/><rect x="66" y="1" width="5" height="5" fill="#55585a"/><rect x="9.5" y="2" width="2" height="3" fill="#e8e8e0"/><polygon points="28,5 72,4 72,11 28,9" fill="#8f979c"/><polygon points="48,4 56,4 56,9 48,9" fill="#aab0b4"/><polygon points="60,3 66,3 66,10 60,10" fill="#6f777c"/><polygon points="0,8 30,8 72,12 72,22 0,22" fill="#aeb08c"/><polygon points="0,8 16,8 10,22 0,22" fill="#d9d2a8"/><polygon points="10,15 18,13 22,15 14,18" fill="#c9cedb"/><polygon points="10,15 14,18 14,23 10,21" fill="#9a9d98"/><polygon points="14,18 22,15 22,20 14,23" fill="#7b7f7c"/><polygon points="24,15 32,13 36,15 28,18" fill="#c3c9d6"/><polygon points="24,15 28,18 28,23 24,21" fill="#9a9d98"/><polygon points="28,18 36,15 36,20 28,23" fill="#7b7f7c"/><polygon points="42,13 52,11 57,13 47,16" fill="#b9c3d3"/><polygon points="42,13 47,16 47,21 42,19" fill="#90948f"/><polygon points="47,16 57,13 57,18 47,21" fill="#757977"/><polygon points="58,15 68,13 72,15 72,22 62,22" fill="#8d9494"/><polygon points="58,14 68,12 72,14 62,17" fill="#b5c0d0"/><polygon points="2,21 9,19 13,22 5,24" fill="#ccd3e2"/><polygon points="0,23 5,24 5,33 0,33" fill="#9c9c92"/><polygon points="5,24 13,22 13,30 5,33" fill="#7f8078"/><polygon points="15,22 23,19 28,22 20,25" fill="#b7c9e4"/><polygon points="15,22 20,25 20,33 15,31" fill="#a3aab0"/><polygon points="20,25 28,22 28,30 20,33" fill="#7d858b"/><polygon points="24,27 33,23 41,27 33,31" fill="#9ab7da"/><polygon points="24,27 33,31 33,41 24,37" fill="#9fa8b2"/><polygon points="33,31 41,27 41,36 33,41" fill="#79828a"/><polygon points="34,20 42,17 48,20 40,23" fill="#a3bce0"/><polygon points="34,20 40,23 40,28 34,26" fill="#949ca5"/><polygon points="40,23 48,20 48,26 40,28" fill="#747c84"/><polygon points="46,26 54,22 60,25 52,29" fill="#8fabd2"/><polygon points="46,26 52,29 52,34 46,32" fill="#939ba4"/><polygon points="52,29 60,25 60,31 52,34" fill="#70787f"/><polygon points="61,26 68,23 72,25 72,28 66,30" fill="#86a3cc"/><polygon points="60,29 66,30 66,40 60,38" fill="#8a929a"/><polygon points="66,30 72,28 72,40 66,40" fill="#6c747b"/><polygon points="37,33 49,27 60,32 48,38" fill="#7e9dc4"/><polygon points="36,34 41,31 43,32 38,35" fill="#8fa83f"/><polygon points="37,33 48,38 48,51 37,46" fill="#98a1ab"/><polygon points="48,38 60,32 60,45 48,51" fill="#6b747c"/><polygon points="9,33 20,31 24,34 12,37" fill="#c1c5c2"/><polygon points="9,33 12,37 12,40 9,37" fill="#9a9d98"/><polygon points="3,41 30,36 46,52 20,60" fill="#93ab42"/><polygon points="17,45 26,43 29,46 20,49" fill="#5fc7cb"/><polygon points="27,43 36,41 40,45 32,48" fill="#c9cabd"/><polygon points="30,52 46,48 54,54 38,62" fill="#8aa43c"/><g fill="#66862c"><circle cx="6" cy="42" r="1.5"/><circle cx="10" cy="44" r="1.5"/><circle cx="14" cy="42" r="1.5"/><circle cx="24" cy="40" r="1.5"/><circle cx="30" cy="44" r="1.5"/><circle cx="12" cy="48" r="1.5"/><circle cx="16" cy="52" r="1.5"/><circle cx="22" cy="54" r="1.5"/><circle cx="28" cy="56" r="1.5"/><circle cx="34" cy="54" r="1.5"/><circle cx="40" cy="52" r="1.5"/><circle cx="44" cy="56" r="1.5"/><circle cx="36" cy="60" r="1.5"/><circle cx="50" cy="50" r="1.5"/><circle cx="56" cy="48" r="1.5"/><circle cx="62" cy="46" r="1.5"/><circle cx="66" cy="50" r="1.5"/><circle cx="58" cy="56" r="1.5"/><circle cx="52" cy="62" r="1.5"/><circle cx="60" cy="64" r="1.5"/><circle cx="46" cy="66" r="1.5"/></g><polygon points="0,46 4,45 48,70 44,72 32,72 0,53" fill="#8d8573"/><polygon points="0,49 2,48 40,72 36,72 0,51" fill="#cfc9b2"/><polygon points="48,60 72,44 72,58 56,70" fill="#9b9a6a"/><polygon points="50,62 72,47 72,50 52,64" fill="#7d7a68"/><polygon points="0,52 6,57 6,60 0,60" fill="#7aa3d0"/><polygon points="0,58 10,62 12,72 0,72" fill="#555b63"/><polygon points="12,66 20,70 20,72 12,72" fill="#7d9a45"/><polygon points="60,72 72,61 72,72" fill="#4c7cc2"/><polygon points="34,68 52,66 60,72 36,72" fill="#8a8474"/><g stroke="#68727c" stroke-width="0.5"><line x1="39.2" y1="34.0" x2="39.2" y2="47.0"/><line x1="41.4" y1="35.0" x2="41.4" y2="48.0"/><line x1="43.6" y1="36.0" x2="43.6" y2="49.0"/><line x1="45.8" y1="37.0" x2="45.8" y2="50.0"/><line x1="37" y1="36.2" x2="48" y2="41.2"/><line x1="37" y1="39.5" x2="48" y2="44.5"/><line x1="37" y1="42.8" x2="48" y2="47.8"/></g><g stroke="#4e5860" stroke-width="0.5"><line x1="50.4" y1="36.8" x2="50.4" y2="49.8"/><line x1="52.8" y1="35.6" x2="52.8" y2="48.6"/><line x1="55.2" y1="34.4" x2="55.2" y2="47.4"/><line x1="57.6" y1="33.2" x2="57.6" y2="46.2"/><line x1="48" y1="41.2" x2="60" y2="35.2"/><line x1="48" y1="44.5" x2="60" y2="38.5"/><line x1="48" y1="47.8" x2="60" y2="41.8"/></g><g stroke="#6c7680" stroke-width="0.5"><line x1="26.2" y1="28.0" x2="26.2" y2="38.0"/><line x1="28.5" y1="29.0" x2="28.5" y2="39.0"/><line x1="30.8" y1="30.0" x2="30.8" y2="40.0"/><line x1="24" y1="30.3" x2="33" y2="34.3"/><line x1="24" y1="33.7" x2="33" y2="37.7"/></g><g stroke="#565f68" stroke-width="0.5"><line x1="35.0" y1="30.0" x2="35.0" y2="39.0"/><line x1="37.0" y1="29.0" x2="37.0" y2="38.0"/><line x1="39.0" y1="28.0" x2="39.0" y2="37.0"/><line x1="33" y1="34.0" x2="41" y2="30.0"/><line x1="33" y1="37.0" x2="41" y2="33.0"/></g><g fill="#6b8a2e"><circle cx="2.0" cy="48.0" r="1.3"/><circle cx="5.6" cy="50.2" r="1.3"/><circle cx="9.2" cy="52.4" r="1.3"/><circle cx="12.8" cy="54.6" r="1.3"/><circle cx="16.4" cy="56.8" r="1.3"/><circle cx="20.0" cy="59.0" r="1.3"/><circle cx="23.6" cy="61.2" r="1.3"/><circle cx="27.2" cy="63.4" r="1.3"/><circle cx="30.8" cy="65.6" r="1.3"/><circle cx="34.4" cy="67.8" r="1.3"/><circle cx="38.0" cy="70.0" r="1.3"/></g><g fill="#73922f"><circle cx="6.0" cy="44.0" r="1.2"/><circle cx="9.8" cy="46.2" r="1.2"/><circle cx="13.6" cy="48.4" r="1.2"/><circle cx="17.4" cy="50.6" r="1.2"/><circle cx="21.2" cy="52.8" r="1.2"/><circle cx="25.0" cy="55.0" r="1.2"/><circle cx="28.8" cy="57.2" r="1.2"/><circle cx="32.6" cy="59.4" r="1.2"/><circle cx="36.4" cy="61.6" r="1.2"/><circle cx="40.2" cy="63.8" r="1.2"/><circle cx="44.0" cy="66.0" r="1.2"/></g><g fill="#6d8c2c"><circle cx="52.0" cy="60.0" r="1.3"/><circle cx="55.6" cy="57.4" r="1.3"/><circle cx="59.2" cy="54.8" r="1.3"/><circle cx="62.8" cy="52.2" r="1.3"/><circle cx="66.4" cy="49.6" r="1.3"/><circle cx="70.0" cy="47.0" r="1.3"/><circle cx="56.0" cy="66.0" r="1.3"/><circle cx="60.0" cy="63.2" r="1.3"/><circle cx="64.0" cy="60.5" r="1.3"/><circle cx="68.0" cy="57.8" r="1.3"/><circle cx="72.0" cy="55.0" r="1.3"/></g><g fill="#7f9a3a"><circle cx="4" cy="36" r="1.4"/><circle cx="8" cy="38" r="1.4"/><circle cx="14" cy="40" r="1.4"/><circle cx="20" cy="38" r="1.4"/><circle cx="26" cy="41" r="1.4"/><circle cx="44" cy="30" r="1.4"/><circle cx="50" cy="46" r="1.4"/><circle cx="62" cy="42" r="1.4"/><circle cx="68" cy="44" r="1.4"/><circle cx="56" cy="38" r="1.4"/><circle cx="30" cy="36" r="1.4"/><circle cx="12" cy="28" r="1.4"/><circle cx="22" cy="18" r="1.4"/><circle cx="40" cy="16" r="1.4"/><circle cx="54" cy="20" r="1.4"/><circle cx="62" cy="20" r="1.4"/><circle cx="6" cy="28" r="1.4"/><circle cx="32" cy="16" r="1.4"/></g><g stroke="#d6cfae" stroke-width="0.5"><line x1="42" y1="70" x2="58" y2="62"/><line x1="46" y1="72" x2="62" y2="64"/></g></g></g></svg></div>
<div class="t nm" style="top:460.00px;letter-spacing:0.052px;left:103.00px;transform-origin:0 50%;transform:scaleX(1.070);">Stratos Tech Park</div>
<div class="t ad" style="top:483.00px;letter-spacing:-0.011px;left:103.00px;transform-origin:0 50%;transform:scaleX(1.070);">22 Oxford Street, W1C 1AP</div>
<div class="t ad" style="top:505.00px;letter-spacing:-0.175px;left:103.00px;transform-origin:0 50%;transform:scaleX(1.070);">London</div>
<div class="sep" style="left:9px;top:634px;width:407px;"></div>
<div style="position:absolute;left:23px;top:554px;width:72px;height:72px;"><svg class="th" width="72" height="72" viewBox="0 0 72 72" preserveAspectRatio="none"><defs><filter id="bl5" x="-5%" y="-5%" width="110%" height="110%"><feGaussianBlur stdDeviation="0.45"/></filter><filter id="gn5" x="0" y="0" width="100%" height="100%"><feTurbulence type="fractalNoise" baseFrequency="0.33" numOctaves="2" seed="16" result="n"/><feColorMatrix in="n" type="matrix" values="0 0 0 0 0  0 0 0 0 0  0 0 0 0 0  1.6 1.2 0 0 -1.05"/></filter><filter id="gw5" x="0" y="0" width="100%" height="100%"><feTurbulence type="fractalNoise" baseFrequency="0.3" numOctaves="2" seed="36" result="n"/><feColorMatrix in="n" type="matrix" values="0 0 0 0 1  0 0 0 0 1  0 0 0 0 1  0 1.3 1.5 0 -1.1"/></filter><clipPath id="cp5"><rect x="0" y="0" width="72" height="72" rx="6" ry="6"/></clipPath></defs><g clip-path="url(#cp5)"><g filter="url(#bl5)"><rect x="0" y="0" width="72" height="72" fill="#a7aca3"/><defs><linearGradient id="sk6" x1="0" y1="0" x2="0" y2="1"><stop offset="0" stop-color="#8d9c93"/><stop offset="1" stop-color="#a7aca3"/></linearGradient></defs><rect x="0" y="0" width="72" height="14" fill="url(#sk6)"/><polygon points="31,0 35,0 31,8 28,10 29,5" fill="#e6eae8"/><polygon points="6,10 20,7 22,10 8,13" fill="#c9cdcc"/><polygon points="8,13 22,10 22,12 8,15" fill="#7f8584"/><polygon points="38,8 48,6 50,9 40,12" fill="#6f7879"/><polygon points="58,2 70,3 70,6 58,5" fill="#7d8788"/><polygon points="54,12 70,14 70,20 54,17" fill="#b5b9b8"/><polygon points="0,16 20,14 40,22 20,30 0,26" fill="#8f9692"/><polygon points="14,18 30,16 34,22 18,25" fill="#777f80"/><polygon points="0,24 8,25 14,30 0,32" fill="#9c6f55"/><polygon points="28,14 44,12 50,18 34,22" fill="#9ba3a2"/><polygon points="42,20 56,16 60,22 48,26" fill="#bcc0bc"/><polygon points="0,32 6,31 34,50 28,60 0,44" fill="#c3c1b4"/><polygon points="8,30 22,28 28,36 14,40" fill="#a9aba2"/><polygon points="12,32 18,31 20,36 14,37" fill="#6a6f6e"/><polygon points="22,33 48,22 62,27 36,40" fill="#aab6bb"/><polygon points="24,30 40,25 42,31 28,36" fill="#565c5e"/><polygon points="48,22 56,20 60,24 52,27" fill="#5e6567"/><polygon points="22,33 36,40 36,48 22,42" fill="#9a9d98"/><polygon points="36,40 62,27 62,34 42,47 36,48" fill="#7a7e7b"/><polygon points="46,36 54,32 56,40 48,42" fill="#5a5f60"/><rect x="61" y="17" width="2" height="15" fill="#8d6f55"/><rect x="64" y="17" width="2" height="15" fill="#8d6f55"/><polygon points="17,39 22,37 27,42 22,45" fill="#7d9443"/><polygon points="28,46 36,44 45,50 38,54" fill="#7d9443"/><polygon points="44,46 52,42 54,44 46,48" fill="#7d9443"/><polygon points="26,50 50,56 72,36 72,58 54,72 18,72 30,60" fill="#c6c4b7"/><polygon points="60,34 72,30 72,40 64,42" fill="#b9b8ad"/><polygon points="62,38 72,36 72,44 66,44" fill="#5e6568"/><polygon points="0,39 4,38 18,51 12,58 0,50" fill="#5c605f"/><polygon points="0,50 12,58 10,62 0,56" fill="#8a8a80"/><polygon points="0,52 2,52 16,66 14,68 0,58" fill="#6d8a3c"/><polygon points="0,58 14,68 12,72 0,72" fill="#8f8f86"/><polygon points="10,42 14,41 28,52 26,54" fill="#b5836a"/><polygon points="53,54 63,46 66,48 56,57" fill="#dddcd6"/><polygon points="56,57 66,48 66,50 57,59" fill="#a5a59f"/><polygon points="47,72 72,47 72,51 51,72" fill="#5d7d35"/><polygon points="54,72 72,54 72,72" fill="#8c8d88"/><g stroke="#e3e4e1" stroke-width="1.8" stroke-linecap="round"><line x1="30" y1="67" x2="36" y2="62"/><line x1="34" y1="70" x2="40" y2="65"/><line x1="37" y1="72" x2="43" y2="67"/><line x1="30" y1="59" x2="35" y2="56"/><line x1="48" y1="56" x2="51" y2="53"/><line x1="54" y1="48" x2="57" y2="45"/><line x1="3" y1="68" x2="8" y2="65"/></g><g stroke="#d2703a" stroke-width="1.8" stroke-linecap="round"><line x1="25" y1="54" x2="29" y2="52"/><line x1="58" y1="44" x2="60" y2="43"/><line x1="56" y1="68" x2="60" y2="64"/><line x1="1" y1="62" x2="3" y2="61"/></g><g stroke="#3e9ab5" stroke-width="1.6" stroke-linecap="round"><line x1="22" y1="53" x2="25" y2="51"/><line x1="2" y1="65" x2="5" y2="63"/></g></g></g></svg></div>
<div class="t nm" style="top:559.00px;letter-spacing:0.182px;left:103.00px;transform-origin:0 50%;transform:scaleX(1.070);">Zephyr Industrial Zone</div>
<div class="t ad" style="top:582.00px;letter-spacing:0.059px;left:103.00px;transform-origin:0 50%;transform:scaleX(1.070);">35 Industrial Road, B6 7TH</div>
<div class="t ad" style="top:604.00px;letter-spacing:0.064px;left:103.00px;transform-origin:0 50%;transform:scaleX(1.070);">Coventry</div>
<div class="b" style="left:9px;top:644px;width:407px;height:89px;background:#e6e6e6;border-left:4px solid #0b78d0;"></div>
<div class="sep" style="left:9px;top:733px;width:407px;"></div>
<div style="position:absolute;left:23px;top:653px;width:72px;height:72px;"><svg class="th" width="72" height="72" viewBox="0 0 72 72" preserveAspectRatio="none"><defs><filter id="bl6" x="-5%" y="-5%" width="110%" height="110%"><feGaussianBlur stdDeviation="0.45"/></filter><filter id="gn6" x="0" y="0" width="100%" height="100%"><feTurbulence type="fractalNoise" baseFrequency="0.33" numOctaves="2" seed="17" result="n"/><feColorMatrix in="n" type="matrix" values="0 0 0 0 0  0 0 0 0 0  0 0 0 0 0  1.6 1.2 0 0 -1.05"/></filter><filter id="gw6" x="0" y="0" width="100%" height="100%"><feTurbulence type="fractalNoise" baseFrequency="0.3" numOctaves="2" seed="37" result="n"/><feColorMatrix in="n" type="matrix" values="0 0 0 0 1  0 0 0 0 1  0 0 0 0 1  0 1.3 1.5 0 -1.1"/></filter><clipPath id="cp6"><rect x="0" y="0" width="72" height="72" rx="6" ry="6"/></clipPath></defs><g clip-path="url(#cp6)"><g filter="url(#bl6)"><defs><linearGradient id="sk7" x1="0.85" y1="0" x2="0.25" y2="1"><stop offset="0" stop-color="#4f82a8"/><stop offset="0.4" stop-color="#8fb9cc"/><stop offset="0.75" stop-color="#cfe2e6"/><stop offset="1" stop-color="#eaf1ee"/></linearGradient></defs><rect x="0" y="0" width="72" height="72" fill="#a3b56e"/><rect x="0" y="0" width="72" height="40" fill="url(#sk7)"/><ellipse cx="16" cy="14.5" rx="5.5" ry="2" fill="#f4f6f4"/><ellipse cx="13" cy="15.5" rx="3" ry="1.3" fill="#f4f6f4"/><ellipse cx="48" cy="13" rx="4.5" ry="1.8" fill="#f4f6f4"/><ellipse cx="41" cy="12" rx="2.2" ry="1" fill="#eef3f4"/><ellipse cx="68" cy="6" rx="6" ry="4.2" fill="#f3f2ea"/><ellipse cx="62" cy="10" rx="3.5" ry="1.2" fill="#eef1ee"/><ellipse cx="67" cy="17.5" rx="4" ry="1.6" fill="#f1f1ea"/><ellipse cx="4" cy="24" rx="6" ry="2" fill="#e6eef2" opacity="0.8"/><polygon points="0,35 72,33 72,44 0,44" fill="#8fae55"/><polygon points="0,33 8,34 8,40 0,40" fill="#7c9a4a"/><polygon points="64,33 72,32 72,40 64,40" fill="#7c9a4a"/><polygon points="3,24 13,24 13,43 3,43" fill="#6a645a"/><polygon points="7,27 13,27 13,41 7,41" fill="#7890aa"/><polygon points="3,23.5 13,23.5 13,25.5 3,25.5" fill="#4e4a44"/><polygon points="14,20 33,21 33,24 14,24" fill="#47474a"/><polygon points="14,24 20,24 20,44 14,44" fill="#b9bcbc"/><polygon points="20,24 34,24 35,27 35,41 20,44" fill="#7a9ecb"/><g stroke="#587595" stroke-width="0.6"><line x1="20" y1="27.5" x2="35" y2="28"/><line x1="20" y1="31" x2="35" y2="31.3"/><line x1="20" y1="34.5" x2="35" y2="34.6"/><line x1="20" y1="38" x2="35" y2="37.8"/><line x1="20" y1="41.3" x2="35" y2="40.2"/></g><g stroke="#9fbbdc" stroke-width="0.5"><line x1="24" y1="24" x2="24" y2="43.3"/><line x1="28" y1="24" x2="28" y2="42.5"/><line x1="32" y1="24" x2="32" y2="41.7"/></g><polygon points="26,33 35,32 35,41 26,42.5" fill="#8aa0b0"/><polygon points="37,25 42,25 42,37 37,37" fill="#8ba0b8"/><polygon points="37,24.5 42,24.5 42,26 37,26" fill="#55585e"/><polygon points="42,17 54,16 62,21 62,24 54,22 42,22" fill="#3a3b40"/><polygon points="42,22 54,22 54,49 42,47" fill="#84a3c8"/><polygon points="45.5,22 48.5,22 48.5,48 45.5,47.5" fill="#b4cbe4"/><polygon points="54,22 62,24 62,44 54,49" fill="#566b83"/><polygon points="42,36 54,36 54,49 42,47" fill="#6a839f"/><g stroke="#5c7899" stroke-width="0.5"><line x1="42" y1="26" x2="54" y2="26"/><line x1="42" y1="30" x2="54" y2="30"/><line x1="42" y1="34" x2="54" y2="34"/><line x1="42" y1="38" x2="54" y2="38.3"/><line x1="42" y1="42" x2="54" y2="42.7"/></g><g stroke="#41546a" stroke-width="0.5"><line x1="54" y1="27" x2="62" y2="28.5"/><line x1="54" y1="32" x2="62" y2="33"/><line x1="54" y1="37" x2="62" y2="37.5"/><line x1="54" y1="42" x2="62" y2="41.5"/></g><g stroke="#7086a0" stroke-width="0.5"><line x1="58" y1="23" x2="58" y2="46.5"/></g><polygon points="62,23 70,23 70,42 62,42" fill="#777f87"/><polygon points="64,26 69,26 69,40 64,40" fill="#8ca5c0"/><polygon points="62,22.5 70,22.5 70,24.5 62,24.5" fill="#4d4f54"/><polygon points="1,40 13,41 13,45 1,44" fill="#c3b193"/><polygon points="12,43 35,45 52,51 52,59 35,52 12,48" fill="#cdbea1"/><polygon points="12,43 35,45 52,51 52,52.5 35,46.5 12,44.5" fill="#e2dccb"/><polygon points="26,47 35,49 35,52 26,50" fill="#8d6f4a"/><g stroke="#8f7d5f" stroke-width="0.7"><line x1="16" y1="45.5" x2="16" y2="48.8"/><line x1="20" y1="46" x2="20" y2="49.6"/><line x1="24" y1="46.4" x2="24" y2="50.3"/><line x1="38" y1="48" x2="38" y2="53.2"/><line x1="41" y1="49" x2="41" y2="54.4"/><line x1="44" y1="50" x2="44" y2="55.6"/><line x1="47" y1="51" x2="47" y2="56.8"/><line x1="50" y1="52" x2="50" y2="58"/></g><polygon points="52,51 66,43 66,50 52,59" fill="#b19c75"/><polygon points="52,51 66,43 66,44.5 52,52.5" fill="#d9d0b8"/><g stroke="#84704f" stroke-width="0.7"><line x1="55" y1="50.5" x2="55" y2="57"/><line x1="58" y1="49" x2="58" y2="55"/><line x1="61" y1="47" x2="61" y2="53.3"/><line x1="64" y1="45.3" x2="64" y2="51.5"/></g><polygon points="66,41 72,40 72,46 66,48" fill="#c3b193"/><polygon points="0,46 12,48 40,60 30,66 0,52" fill="#9bb75c"/><polygon points="0,50 4,49 38,72 20,72 0,60" fill="#b3b3b1"/><polygon points="18,56 32,54 40,58 30,62" fill="#98999b"/><polygon points="0,60 16,72 0,72" fill="#76787b"/><g stroke="#d9d9d9" stroke-width="0.5"><line x1="2" y1="64" x2="10" y2="70"/></g><polygon points="34,64 48,56 52,59 38,68" fill="#8fb04a"/><polygon points="34,72 50,60 56,62 44,72" fill="#d8d8d4"/><polygon points="48,72 70,48 72,48 72,52 56,72" fill="#8fb04a"/><polygon points="58,72 72,54 72,72" fill="#8a8c8e"/><g stroke="#d9d9d9" stroke-width="0.5"><line x1="62" y1="72" x2="72" y2="59"/></g><polygon points="40,66 44,64 46,66 42,68" fill="#b06a3a"/><g fill="#6d9a3a"><circle cx="2" cy="47" r="1.5"/><circle cx="6" cy="49" r="1.5"/><circle cx="10" cy="51" r="1.5"/><circle cx="14" cy="53" r="1.5"/><circle cx="18" cy="52" r="1.5"/><circle cx="22" cy="50" r="1.5"/><circle cx="3" cy="56" r="1.5"/><circle cx="7" cy="58" r="1.5"/><circle cx="11" cy="60" r="1.5"/><circle cx="15" cy="62" r="1.5"/><circle cx="19" cy="64" r="1.5"/><circle cx="36" cy="54" r="1.5"/><circle cx="40" cy="56" r="1.5"/><circle cx="44" cy="58" r="1.5"/><circle cx="38" cy="63" r="1.5"/><circle cx="42" cy="62" r="1.5"/><circle cx="52" cy="64" r="1.5"/><circle cx="56" cy="60" r="1.5"/><circle cx="60" cy="56" r="1.5"/><circle cx="64" cy="52" r="1.5"/><circle cx="68" cy="50" r="1.5"/><circle cx="26" cy="58" r="1.5"/><circle cx="30" cy="60" r="1.5"/><circle cx="23" cy="66" r="1.5"/><circle cx="27" cy="69" r="1.5"/><circle cx="47" cy="62" r="1.5"/><circle cx="50" cy="67" r="1.5"/><circle cx="54" cy="70" r="1.5"/></g><g fill="#a5c765"><circle cx="2.5" cy="46.5" r="0.8"/><circle cx="10.5" cy="50.5" r="0.8"/><circle cx="18.5" cy="51.5" r="0.8"/><circle cx="7.5" cy="57.5" r="0.8"/><circle cx="15.5" cy="61.5" r="0.8"/><circle cx="40.5" cy="55.5" r="0.8"/><circle cx="56.5" cy="59.5" r="0.8"/><circle cx="64.5" cy="51.5" r="0.8"/><circle cx="50.5" cy="66.5" r="0.8"/></g><rect x="12" y="59" width="2.6" height="1.6" fill="#3c4046"/><rect x="24" y="63" width="2.6" height="1.6" fill="#e6e6e6"/><rect x="28" y="57" width="2.4" height="1.4" fill="#e6e6e6"/><rect x="65" y="62" width="2.4" height="1.6" fill="#f0f0f0"/><rect x="6" y="66" width="2.6" height="1.6" fill="#2f3338"/></g></g></svg></div>
<div class="t nmb" id="m_nmb" style="top:658.00px;letter-spacing:0.259px;left:103.00px;transform-origin:0 50%;transform:scaleX(1.090);">Hilite Business Center</div>
<div class="t ad" style="top:681.00px;letter-spacing:-0.051px;left:103.00px;transform-origin:0 50%;transform:scaleX(1.070);">40 King Street, PR1 2HE</div>
<div class="t ad" style="top:703.00px;letter-spacing:-0.149px;left:103.00px;transform-origin:0 50%;transform:scaleX(1.070);">Preston</div>
<div class="sep" style="left:9px;top:832px;width:407px;"></div>
<div style="position:absolute;left:23px;top:752px;width:72px;height:72px;"><svg class="th" width="72" height="72" viewBox="0 0 72 72" preserveAspectRatio="none"><defs><filter id="bl7" x="-5%" y="-5%" width="110%" height="110%"><feGaussianBlur stdDeviation="0.45"/></filter><filter id="gn7" x="0" y="0" width="100%" height="100%"><feTurbulence type="fractalNoise" baseFrequency="0.33" numOctaves="2" seed="18" result="n"/><feColorMatrix in="n" type="matrix" values="0 0 0 0 0  0 0 0 0 0  0 0 0 0 0  1.6 1.2 0 0 -1.05"/></filter><filter id="gw7" x="0" y="0" width="100%" height="100%"><feTurbulence type="fractalNoise" baseFrequency="0.3" numOctaves="2" seed="38" result="n"/><feColorMatrix in="n" type="matrix" values="0 0 0 0 1  0 0 0 0 1  0 0 0 0 1  0 1.3 1.5 0 -1.1"/></filter><clipPath id="cp7"><rect x="0" y="0" width="72" height="72" rx="6" ry="6"/></clipPath></defs><g clip-path="url(#cp7)"><g filter="url(#bl7)"><rect x="0" y="0" width="72" height="72" fill="#a7aeb3"/><rect x="0" y="0" width="72" height="5" fill="#7c8a6a"/><polygon points="0,0 20,0 22,3 0,4" fill="#8f9a7c"/><polygon points="0,5 30,3 44,6 44,10 0,10" fill="#aab4bd"/><polygon points="20,1 29,1 29,9 20,9" fill="#b7c0c6"/><polygon points="25,1 29,1 29,9 25,9" fill="#8e99a3"/><polygon points="45,3 62,3 62,15 45,13" fill="#c5cdd2"/><polygon points="52,3 55,3 55,14 52,14" fill="#8d98a5"/><polygon points="62,6 72,5 72,14 62,14" fill="#9aa5ae"/><polygon points="0,6 16,8 16,17 0,16" fill="#8b949a"/><polygon points="0,12 14,13 14,19 0,18" fill="#c1b9a8"/><polygon points="16,8 22,8 22,18 16,17" fill="#b9c1c6"/><polygon points="22,10 38,9 38,20 22,18" fill="#c9cfd2"/><polygon points="31,11 38,10 38,20 31,19" fill="#77828e"/><polygon points="24,10 36,9 37,11 25,12" fill="#9db37a"/><polygon points="33,14 44,13 44,22 33,21" fill="#aeb7bf"/><polygon points="42,15 62,16 62,27 42,25" fill="#d7dbdc"/><polygon points="53,17 62,17 62,27 53,26" fill="#8a95a3"/><polygon points="44,15 60,16 60,18 44,17" fill="#a3b583"/><polygon points="58,20 72,18 72,29 58,29" fill="#c7cfd7"/><polygon points="66,21 72,20 72,29 66,29" fill="#7f8a97"/><polygon points="0,18 12,17 22,20 22,25 0,25" fill="#9aa0a3"/><polygon points="2,20 18,19 18,23 2,24" fill="#c3c8ca"/><polygon points="0,24 30,21 42,27 42,30 0,30" fill="#a88d74"/><polygon points="8,25 24,23 30,26 14,28" fill="#c5c9cb"/><polygon points="18,26 34,25 36,30 20,30" fill="#6f6660"/><polygon points="38,25 58,27 58,30 38,30" fill="#b79a7f"/><rect x="0" y="29" width="72" height="43" fill="#9a9fa3"/></g></g></svg></div>
<div class="t nm" style="top:757.00px;letter-spacing:-0.172px;left:103.00px;transform-origin:0 50%;transform:scaleX(1.070);">Echo Commerce Hub</div>
<div class="t ad" style="top:780.00px;letter-spacing:0.065px;left:103.00px;transform-origin:0 50%;transform:scaleX(1.070);">12 Market Street, M1 1AA</div>
<div class="t ad" style="top:802.00px;letter-spacing:-0.114px;left:103.00px;transform-origin:0 50%;transform:scaleX(1.070);">Manchester</div>
<div class="b" style="left:0;top:0;width:425px;height:35.6px;background:#fff;border-radius:5px;box-shadow:0 1px 2px rgba(0,0,0,.18);"></div>
<div class="b" style="left:10px;top:3px;width:405px;height:27.5px;background:#fff;border:1px solid #c4c4c4;border-radius:4px;"></div>
<div class="t srch" id="m_srch" style="top:9.00px;letter-spacing:-0.098px;left:212.30px;transform:translateX(-50%) scaleX(1.070);margin-left:-0.05px;">Search Estate</div>
<div class="b" style="left:182px;top:749px;width:62px;height:34.6px;background:rgba(240,238,236,.87);border:1.1px solid #7a7876;"></div>
<svg style="position:absolute;left:206px;top:761px" width="14" height="10" viewBox="0 0 14 10"><path d="M1 1.3 L7 7.3 L13 1.3" fill="none" stroke="#484848" stroke-width="2.9"/></svg>
</div>
<div class="b" style="left:437.5px;top:62.5px;width:1263.5px;height:782px;background:#fff;border-radius:4px;"></div>
<div class="pn" style="left:442px;top:67px;width:822px;height:383px;"></div>
<div class="t ctitle" id="m_ctitle" style="top:83.00px;letter-spacing:0.417px;left:853.30px;transform:translateX(-50%) scaleX(1.090);margin-left:0.23px;">Rent Due Vs Paid - Year To Date</div>
<svg style="position:absolute;left:0;top:0" width="1707" height="893" viewBox="0 0 1707 893"><rect x="526" y="358.86" width="692.6" height="1.1" fill="#e4e4e4"/><rect x="526" y="328.42" width="692.6" height="1.1" fill="#e4e4e4"/><rect x="526" y="297.98" width="692.6" height="1.1" fill="#e4e4e4"/><rect x="526" y="267.54" width="692.6" height="1.1" fill="#e4e4e4"/><rect x="526" y="237.10" width="692.6" height="1.1" fill="#e4e4e4"/><rect x="526" y="206.66" width="692.6" height="1.1" fill="#e4e4e4"/><rect x="526" y="176.22" width="692.6" height="1.1" fill="#e4e4e4"/><rect x="526" y="145.78" width="692.6" height="1.1" fill="#e4e4e4"/><rect x="537.00" y="171.90" width="22.70" height="218.30" fill="#00adee"/><rect x="565.15" y="263.28" width="22.70" height="126.92" fill="#8ed05c"/><rect x="593.36" y="171.90" width="22.70" height="218.30" fill="#00adee"/><rect x="621.51" y="263.28" width="22.70" height="126.92" fill="#8ed05c"/><rect x="649.72" y="171.90" width="22.70" height="218.30" fill="#00adee"/><rect x="677.87" y="263.28" width="22.70" height="126.92" fill="#8ed05c"/><rect x="706.08" y="171.90" width="22.70" height="218.30" fill="#00adee"/><rect x="762.44" y="171.90" width="22.70" height="218.30" fill="#00adee"/><rect x="818.80" y="171.90" width="22.70" height="218.30" fill="#00adee"/><rect x="875.16" y="171.90" width="22.70" height="218.30" fill="#00adee"/><rect x="931.52" y="171.90" width="22.70" height="218.30" fill="#00adee"/><rect x="987.88" y="171.90" width="22.70" height="218.30" fill="#00adee"/><rect x="1044.24" y="171.90" width="22.70" height="218.30" fill="#00adee"/><rect x="1100.60" y="171.90" width="22.70" height="218.30" fill="#00adee"/><rect x="1156.96" y="171.90" width="22.70" height="218.30" fill="#00adee"/><rect x="525" y="115.3" width="1" height="275" fill="#6e6e6e"/><rect x="525" y="389.6" width="693.6" height="1.3" fill="#6e6e6e"/></svg>
<div class="t cl" style="top:383.00px;letter-spacing:0.000px;left:516.40px;transform-origin:100% 50%;transform:translateX(-100%) scaleX(1.050);margin-left:0.00px;">0</div>
<div class="t cl" style="top:352.00px;letter-spacing:0.253px;left:516.40px;transform-origin:100% 50%;transform:translateX(-100%) scaleX(1.050);margin-left:0.27px;">5,000</div>
<div class="t cl" style="top:322.00px;letter-spacing:0.230px;left:519.30px;transform-origin:100% 50%;transform:translateX(-100%) scaleX(1.050);margin-left:0.24px;">10,000</div>
<div class="t cl" style="top:291.00px;letter-spacing:0.230px;left:519.30px;transform-origin:100% 50%;transform:translateX(-100%) scaleX(1.050);margin-left:0.24px;">15,000</div>
<div class="t cl" style="top:261.00px;letter-spacing:0.230px;left:519.30px;transform-origin:100% 50%;transform:translateX(-100%) scaleX(1.050);margin-left:0.24px;">20,000</div>
<div class="t cl" style="top:231.00px;letter-spacing:0.230px;left:519.30px;transform-origin:100% 50%;transform:translateX(-100%) scaleX(1.050);margin-left:0.24px;">25,000</div>
<div class="t cl" style="top:200.00px;letter-spacing:0.230px;left:519.30px;transform-origin:100% 50%;transform:translateX(-100%) scaleX(1.050);margin-left:0.24px;">30,000</div>
<div class="t cl" style="top:170.00px;letter-spacing:0.230px;left:519.30px;transform-origin:100% 50%;transform:translateX(-100%) scaleX(1.050);margin-left:0.24px;">35,000</div>
<div class="t cl" style="top:139.00px;letter-spacing:0.230px;left:519.30px;transform-origin:100% 50%;transform:translateX(-100%) scaleX(1.050);margin-left:0.24px;">40,000</div>
<div class="t cl" id="m_cl" style="top:109.00px;letter-spacing:0.230px;left:519.30px;transform-origin:100% 50%;transform:translateX(-100%) scaleX(1.050);margin-left:0.24px;">45,000</div>
<div class="t cl" style="top:397.00px;letter-spacing:-0.460px;left:555.30px;transform:translateX(-50%) scaleX(1.050);margin-left:-0.24px;">Jan</div>
<div class="t cl" style="top:397.00px;letter-spacing:-0.539px;left:612.40px;transform:translateX(-50%) scaleX(1.050);margin-left:-0.28px;">Feb</div>
<div class="t cl" style="top:397.00px;letter-spacing:-0.206px;left:669.20px;transform:translateX(-50%) scaleX(1.050);margin-left:-0.11px;">Mar</div>
<div class="t cl" style="top:397.00px;letter-spacing:-0.002px;left:724.90px;transform:translateX(-50%) scaleX(1.050);margin-left:-0.00px;">Apr</div>
<div class="t cl" style="top:397.00px;letter-spacing:-0.296px;left:782.40px;transform:translateX(-50%) scaleX(1.050);margin-left:-0.16px;">May</div>
<div class="t cl" style="top:397.00px;letter-spacing:-0.324px;left:837.60px;transform:translateX(-50%) scaleX(1.050);margin-left:-0.17px;">Jun</div>
<div class="t cl" style="top:397.00px;letter-spacing:-0.267px;left:892.20px;transform:translateX(-50%) scaleX(1.050);margin-left:-0.14px;">Jul</div>
<div class="t cl" style="top:397.00px;letter-spacing:-0.184px;left:951.00px;transform:translateX(-50%) scaleX(1.050);margin-left:-0.10px;">Aug</div>
<div class="t cl" style="top:397.00px;letter-spacing:-0.341px;left:1007.60px;transform:translateX(-50%) scaleX(1.050);margin-left:-0.18px;">Sep</div>
<div class="t cl" style="top:397.00px;letter-spacing:-0.136px;left:1063.30px;transform:translateX(-50%) scaleX(1.050);margin-left:-0.07px;">Oct</div>
<div class="t cl" style="top:397.00px;letter-spacing:-0.149px;left:1120.50px;transform:translateX(-50%) scaleX(1.050);margin-left:-0.08px;">Nov</div>
<div class="t cl" style="top:397.00px;letter-spacing:-0.401px;left:1177.00px;transform:translateX(-50%) scaleX(1.050);margin-left:-0.21px;">Dec</div>
<div class="pn" style="left:1267px;top:66.5px;width:430px;height:383.5px;box-shadow:0 1px 2px rgba(0,0,0,.25);"></div>
<div class="t kl" id="m_kl" style="top:174.00px;letter-spacing:0.308px;left:1482.00px;transform:translateX(-50%) scaleX(1.090);margin-left:0.17px;">Total Active Leases</div>
<div class="t kl2" style="top:236.00px;letter-spacing:0.469px;left:1482.00px;transform:translateX(-50%) scaleX(1.090);margin-left:0.26px;">Total Monthly Rent Due</div>
<div class="t kl" style="top:295.00px;letter-spacing:0.437px;left:1482.00px;transform:translateX(-50%) scaleX(1.090);margin-left:0.24px;">Total Rent Collected (MTD)</div>
<div class="b" style="left:1321px;top:197px;width:322px;height:31px;border-radius:8px;background:#004b80;"></div>
<div class="b" style="left:1321px;top:257px;width:322px;height:32px;border-radius:8px;background:#5f8a32;"></div>
<div class="b" style="left:1321px;top:317px;width:322px;height:32px;border-radius:8px;background:#0077b8;"></div>
<div class="t" style="left:1481.6px;top:204.96px;transform:translateX(-50%) scaleX(1.24);font-family:'Liberation Serif',serif;font-weight:700;font-size:15.6px;color:#fff;-webkit-text-stroke:0.3px #fff;">9</div>
<div class="t pill" id="m_pill" style="top:266.00px;letter-spacing:0.580px;left:1482.00px;transform:translateX(-50%) scaleX(1.040);margin-left:0.30px;">£35,833.33</div>
<div class="t pill" style="top:326.00px;letter-spacing:0.580px;left:1482.00px;transform:translateX(-50%) scaleX(1.040);margin-left:0.30px;">£20,833.33</div>
<div class="pn" style="left:443px;top:462px;width:404px;height:374px;"></div>
<div class="t h" id="m_h" style="top:479.00px;letter-spacing:0.334px;left:645.00px;transform:translateX(-50%) scaleX(1.090);margin-left:0.18px;">Active Lease Agreement</div>
<div class="t ten" id="m_ten" style="top:501.00px;letter-spacing:0.392px;left:455.30px;transform-origin:0 50%;transform:scaleX(1.090);">Tenant: Zenith Tech Solutions</div>
<div class="t date" id="m_date" style="top:518.00px;letter-spacing:0.188px;left:455.30px;transform-origin:0 50%;transform:scaleX(1.070);">01-Jan-2025 - 31-Dec-2025</div>
<div class="t term" id="m_term" style="top:533.00px;letter-spacing:0.246px;left:455.30px;transform-origin:0 50%;transform:scaleX(1.070);">Term Rent : £20,833</div>
<div class="sep" style="left:444px;top:550px;width:288px;"></div>
<div class="t ten" style="top:555.00px;letter-spacing:0.420px;left:455.30px;transform-origin:0 50%;transform:scaleX(1.090);">Tenant: Greenfield Retailers</div>
<div class="t date" style="top:572.00px;letter-spacing:0.195px;left:455.30px;transform-origin:0 50%;transform:scaleX(1.070);">01-Jan-2025 - 30-Jun-2026</div>
<div class="t term" style="top:587.00px;letter-spacing:0.246px;left:455.30px;transform-origin:0 50%;transform:scaleX(1.070);">Term Rent : £15,000</div>
<div class="sep" style="left:444px;top:604px;width:288px;"></div>
<div class="t ten" style="top:609.00px;letter-spacing:0.430px;left:455.30px;transform-origin:0 50%;transform:scaleX(1.090);">Tenant: Bright Future Ltd.</div>
<div class="t date" style="top:626.00px;letter-spacing:0.249px;left:455.30px;transform-origin:0 50%;transform:scaleX(1.070);">20-Mar-2025 - 20-Mar-</div>
<div class="t term" style="top:641.00px;letter-spacing:0.246px;left:455.30px;transform-origin:0 50%;transform:scaleX(1.070);">Term Rent : £18,333</div>
<div class="sep" style="left:444px;top:658px;width:288px;"></div>
<div class="t ten" style="top:663.00px;letter-spacing:0.531px;left:455.30px;transform-origin:0 50%;transform:scaleX(1.090);">Tenant: Elite Interiors</div>
<div class="t date" style="top:680.00px;letter-spacing:0.227px;left:455.30px;transform-origin:0 50%;transform:scaleX(1.070);">10-May-2025 - 10-May-</div>
<div class="t term" style="top:695.00px;letter-spacing:0.246px;left:455.30px;transform-origin:0 50%;transform:scaleX(1.070);">Term Rent : £16,667</div>
<div class="sep" style="left:444px;top:712px;width:288px;"></div>
<div class="t ten" style="top:717.00px;letter-spacing:0.390px;left:455.30px;transform-origin:0 50%;transform:scaleX(1.090);">Tenant: Skyline Architects</div>
<div class="t date" style="top:734.00px;letter-spacing:0.215px;left:455.30px;transform-origin:0 50%;transform:scaleX(1.070);">01-Jul-2025 - 30-Jun-2025</div>
<div class="t term" style="top:749.00px;letter-spacing:0.246px;left:455.30px;transform-origin:0 50%;transform:scaleX(1.070);">Term Rent : £25,000</div>
<div class="sep" style="left:444px;top:766px;width:288px;"></div>
<div class="t ten" style="top:771.00px;letter-spacing:0.378px;left:455.30px;transform-origin:0 50%;transform:scaleX(1.090);">Tenant: Greenfield Holdings</div>
<div class="t date" style="top:788.00px;letter-spacing:0.254px;left:455.30px;transform-origin:0 50%;transform:scaleX(1.070);">01-Aug-2025 - 01-Aug-</div>
<div class="t term" style="top:803.00px;letter-spacing:0.246px;left:455.30px;transform-origin:0 50%;transform:scaleX(1.070);">Term Rent : £25,833</div>
<div class="sep" style="left:444px;top:820px;width:288px;"></div>
<div class="b" style="left:557px;top:790px;width:62px;height:34.6px;background:rgba(240,238,236,.87);border:1.1px solid #7a7876;"></div>
<svg style="position:absolute;left:581px;top:802.6px" width="14" height="10" viewBox="0 0 14 10"><path d="M1 1.3 L7 7.3 L13 1.3" fill="none" stroke="#484848" stroke-width="2.9"/></svg>
<div class="pn" style="left:850px;top:462px;width:411px;height:374px;"></div>
<div class="t h" style="top:479.00px;letter-spacing:0.403px;left:856.00px;transform-origin:0 50%;transform:scaleX(1.090);">Lease Expiry (Days)</div>
<div class="b" style="left:1063px;top:477px;width:142px;height:6px;border-radius:3px;background:#b5dc8c;"></div>
<div class="b" style="left:1197.5px;top:472.2px;width:12.4px;height:12.4px;border-radius:50%;background:#5f8a32;"></div>
<div class="t s180" id="m_180" style="top:472.00px;letter-spacing:0.188px;left:1218.30px;transform-origin:0 50%;transform:scaleX(1.070);">180</div>
<div class="t ten" style="top:501.00px;letter-spacing:0.390px;left:861.90px;transform-origin:0 50%;transform:scaleX(1.090);">Tenant: Skyline Architects</div>
<div class="t date" style="top:518.00px;letter-spacing:0.215px;left:861.90px;transform-origin:0 50%;transform:scaleX(1.070);">01-Jul-2025 - 30-Jun-2025</div>
<div class="t term" style="top:533.00px;letter-spacing:0.246px;left:861.90px;transform-origin:0 50%;transform:scaleX(1.070);">Term Rent : £25,000</div>
<div class="sep" style="left:851px;top:550px;width:288px;"></div>
<div class="pn" style="left:1267px;top:458px;width:430px;height:382.5px;"></div>
<div class="t h" style="top:474.00px;letter-spacing:0.365px;left:1482.30px;transform:translateX(-50%) scaleX(1.090);margin-left:0.20px;">Rent Overdue</div>
<div class="t ten" style="top:497.00px;letter-spacing:0.420px;left:1278.30px;transform-origin:0 50%;transform:scaleX(1.090);">Tenant: Greenfield Retailers</div>
<div class="t date" style="top:513.00px;letter-spacing:0.143px;left:1278.30px;transform-origin:0 50%;transform:scaleX(1.070);">Due Date:01-Jan-2025</div>
<div class="t term" style="top:528.00px;letter-spacing:0.246px;left:1278.30px;transform-origin:0 50%;transform:scaleX(1.070);">Term Rent : £15,000</div>
<div class="sep" style="left:1268px;top:546px;width:428px;"></div>
<div class="t ten" style="top:551.00px;letter-spacing:0.420px;left:1278.30px;transform-origin:0 50%;transform:scaleX(1.090);">Tenant: Greenfield Retailers</div>
<div class="t date" style="top:567.00px;letter-spacing:0.133px;left:1278.30px;transform-origin:0 50%;transform:scaleX(1.070);">Due Date:01-Feb-2025</div>
<div class="t term" style="top:582.00px;letter-spacing:0.246px;left:1278.30px;transform-origin:0 50%;transform:scaleX(1.070);">Term Rent : £15,000</div>
<div class="sep" style="left:1268px;top:600px;width:428px;"></div>
<div class="t ten" style="top:605.00px;letter-spacing:0.420px;left:1278.30px;transform-origin:0 50%;transform:scaleX(1.090);">Tenant: Greenfield Retailers</div>
<div class="t date" style="top:621.00px;letter-spacing:0.174px;left:1278.30px;transform-origin:0 50%;transform:scaleX(1.070);">Due Date:01-Mar-2025</div>
<div class="t term" style="top:636.00px;letter-spacing:0.246px;left:1278.30px;transform-origin:0 50%;transform:scaleX(1.070);">Term Rent : £15,000</div>
<div class="sep" style="left:1268px;top:654px;width:428px;"></div>
<div class="b" style="left:3px;top:853.7px;width:1702px;height:36px;background:#111822;border-radius:6px;"></div>
<div class="t foot" id="m_foot" style="top:865.00px;letter-spacing:-0.150px;left:854.30px;transform:translateX(-50%) scaleX(1.000);margin-left:-0.07px;">Copyright @ QUBIXGRID 2024</div>
</body></html>
